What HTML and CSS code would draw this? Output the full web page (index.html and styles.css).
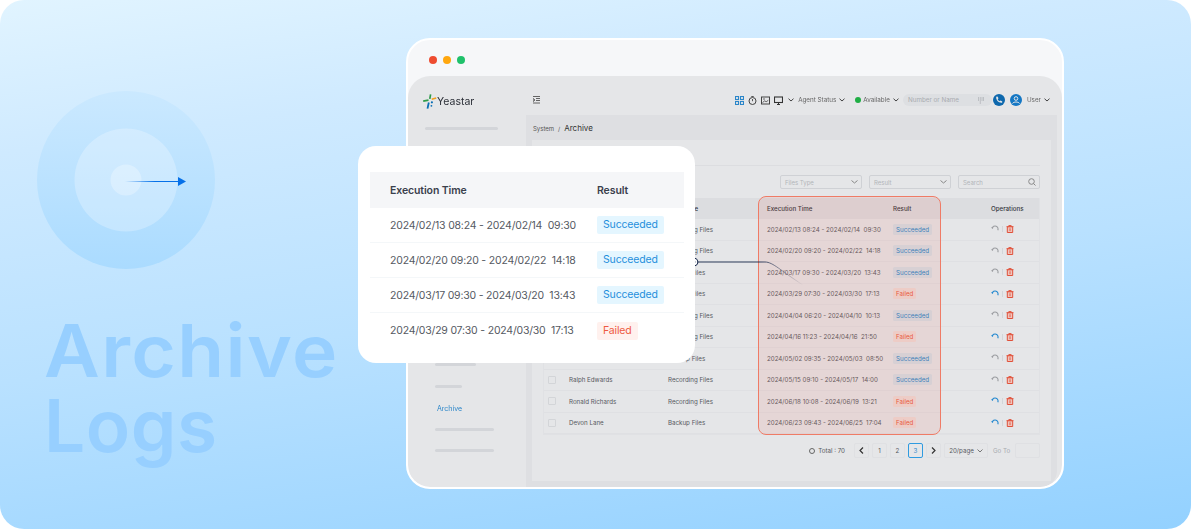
FILE: index.html
```html
<!DOCTYPE html>
<html lang="en">
<head>
<meta charset="utf-8">
<title>Archive Logs</title>
<link rel="stylesheet" href="styles.css">
</head>
<body>
<svg class="sprite" width="0" height="0" aria-hidden="true">
  <symbol id="ico-retry" viewBox="0 0 8 8">
    <path d="M6.800 5.300A3 3 0 1 0 1.200 3.200" fill="none" stroke="currentColor" stroke-width="1.100"/>
    <path d="M.1 2.200l1.300 1.700 1.200-1.500z" fill="currentColor"/>
  </symbol>
  <symbol id="ico-bin" viewBox="0 0 8 8">
    <path d="M.5 1.600h7M2.800 1.500V.5h2.400v1" fill="none" stroke="#e0513a" stroke-width=".9"/>
    <path d="M1.300 1.800h5.400v5.700H1.300z" fill="#f0c4bc" stroke="#e0513a" stroke-width="1"/>
    <path d="M4 3.300v2.800" stroke="#e0513a" stroke-width=".9"/>
  </symbol>
  <symbol id="ico-chev" viewBox="0 0 6 4">
    <path d="M.5.700l2.500 2.300 2.500-2.300" fill="none" stroke="#444" stroke-width="1"/>
  </symbol>
</svg>
<main class="stage">
  <svg class="rings" width="180" height="180" viewBox="0 0 180 180" aria-hidden="true">
    <defs>
      <linearGradient id="ringFill" x1="0" y1="0" x2="0" y2="1">
        <stop offset="0" stop-color="#c9e8ff" stop-opacity=".85"/>
        <stop offset="1" stop-color="#aadbff"/>
      </linearGradient>
      <linearGradient id="arrowLine" x1="0" y1="0" x2="1" y2="0">
        <stop offset="0" stop-color="#0670e8" stop-opacity="0"/>
        <stop offset=".55" stop-color="#0670e8"/>
      </linearGradient>
    </defs>
    <circle cx="89" cy="89" r="89" fill="url(#ringFill)"/>
    <circle cx="89" cy="89" r="51.500" fill="#fff" fill-opacity=".26"/>
    <circle cx="89" cy="89" r="15.500" fill="#fff" fill-opacity=".28"/>
    <rect x="88" y="90" width="54" height="1" fill="url(#arrowLine)"/>
    <path d="M141 86l8 4.500-8 4.500z" fill="#0670e8"/>
  </svg>
  <h1 class="headline"><span class="headline-first">Archive</span><span class="headline-second">Logs</span></h1>

  <section class="window">
    <div class="dots"><i class="dot red"></i><i class="dot amber"></i><i class="dot green"></i></div>
    <div class="app">
      <aside class="sidebar">
        <div class="logo">
          <svg width="14" height="15" viewBox="0 0 14 15" aria-hidden="true">
            <path d="M7.600.4L6.800 4.800M.2 7.200l5.300-1" fill="none" stroke="#2e9b49" stroke-width="1.700"/>
            <path d="M8.700 5.200L13.200 4" fill="none" stroke="#f0a01e" stroke-width="1.700"/>
            <path d="M5.800 8.500L4.500 14.600" fill="none" stroke="#0a6fb5" stroke-width="1.800"/>
            <circle cx="8.900" cy="8.300" r="1.100" fill="#0a6fb5"/>
            <circle cx="8.400" cy="11.800" r=".9" fill="#0a6fb5"/>
          </svg>
          <span>Yeastar</span>
        </div>
        <div class="skeleton wide"></div>
        <div class="side-bottom">
          <div class="skeleton mid"></div>
          <div class="skeleton short"></div>
          <div class="side-link">Archive</div>
          <div class="skeleton long first-long"></div>
          <div class="skeleton long"></div>
        </div>
      </aside>
      <div class="workspace">
        <header class="topbar">
          <svg class="menu-ico" width="8" height="8" viewBox="0 0 8 8" aria-hidden="true"><path d="M0 .5h7M3 2.500h4M3 4.500h4M0 7h7M0 2.500l2 1.500-2 1.500z" stroke="#555" stroke-width=".9" fill="none"/></svg>
          <div class="tools">
            <svg width="9" height="9" viewBox="0 0 9 9" aria-hidden="true"><g fill="none" stroke="#2b86c9" stroke-width="1.100"><rect x=".5" y=".5" width="3" height="3"/><rect x="5.500" y=".5" width="3" height="3"/><rect x=".5" y="5.500" width="3" height="3"/><rect x="5.500" y="5.500" width="3" height="3"/></g></svg>
            <svg class="gap-a" width="9" height="9" viewBox="0 0 9 9" aria-hidden="true"><circle cx="4.500" cy="5" r="3.500" fill="none" stroke="#444"/><path d="M4.500 3v2.200M3.300.5h2.400" stroke="#444" stroke-width=".9"/></svg>
            <svg class="gap-a" width="9" height="9" viewBox="0 0 9 9" aria-hidden="true"><rect x=".5" y="1" width="8" height="7" fill="none" stroke="#444"/><path d="M1.500 6.500l2.300-1.700 1.300 1 2.200-1.500M2 3h2" fill="none" stroke="#444" stroke-width=".8"/></svg>
            <svg class="gap-a" width="9" height="9" viewBox="0 0 9 9" aria-hidden="true"><rect x=".5" y="1" width="8" height="5.500" fill="none" stroke="#333" stroke-width="1.100"/><path d="M3 8.500h3M4.500 6.500v2" stroke="#333"/></svg>
            <svg class="chev gap-b" width="6" height="4" aria-hidden="true"><use href="#ico-chev"/></svg>
            <span class="top-label">Agent Status</span>
            <svg class="chev" width="6" height="4" aria-hidden="true"><use href="#ico-chev"/></svg>
            <i class="status-dot"></i>
            <span class="top-label tight">Available</span>
            <svg class="chev" width="6" height="4" aria-hidden="true"><use href="#ico-chev"/></svg>
            <div class="dial"><span>Number or Name</span><svg width="6" height="7" viewBox="0 0 6 7" aria-hidden="true"><path d="M.5 0v4M2.300 0v7M4 0v4M5.500 0v4" stroke="#b5b8bc" stroke-width=".8"/></svg></div>
            <span class="round-btn"><svg width="8" height="8" viewBox="0 0 8 8" aria-hidden="true"><path d="M1.200.8l1.300-.2 1 1.700-.8.900c.4.900 1.100 1.600 2 2l.9-.8 1.700 1-.2 1.300c-3.200.5-6.300-2.600-5.900-5.900z" fill="#e5e6e8"/></svg></span>
            <span class="round-btn user"><svg width="10" height="10" viewBox="0 0 10 10" aria-hidden="true"><circle cx="5" cy="3.500" r="1.800" fill="none" stroke="#e5e6e8"/><path d="M1.500 8.500c1-2 6-2 7 0" fill="none" stroke="#e5e6e8"/></svg></span>
            <span class="top-label">User</span>
            <svg class="chev" width="6" height="4" aria-hidden="true"><use href="#ico-chev"/></svg>
          </div>
        </header>
        <div class="content">
          <div class="crumb"><span class="crumb-root">System</span><span class="crumb-sep">/</span><span class="crumb-now">Archive</span></div>
          <div class="panel">
            <div class="panel-head"></div>
            <div class="filters">
              <div class="field"><span>Files Type</span><svg width="7" height="4" viewBox="0 0 7 4" aria-hidden="true"><path d="M.5.500l3 2.500 3-2.500" fill="none" stroke="#888"/></svg></div>
              <div class="field"><span>Result</span><svg width="7" height="4" viewBox="0 0 7 4" aria-hidden="true"><path d="M.5.500l3 2.500 3-2.500" fill="none" stroke="#888"/></svg></div>
              <div class="field"><span>Search</span><svg width="8" height="8" viewBox="0 0 8 8" aria-hidden="true"><circle cx="3.500" cy="3.500" r="2.800" fill="none" stroke="#888"/><path d="M5.500 5.500l2 2" stroke="#888"/></svg></div>
            </div>
            <div class="log-table">
              <div class="log-row log-head"><span class="c-check"></span><span class="c-name"></span><span class="c-type">Files Type</span><span class="c-time">Execution Time</span><span class="c-result">Result</span><span class="c-ops">Operations</span></div>
              <div class="log-row"><span class="c-check"></span><span class="c-name"></span><span class="c-type">Recording Files</span><span class="c-time">2024/02/13 08:24 - 2024/02/14&nbsp; 09:30</span><span class="c-result"><b class="tag ok">Succeeded</b></span><span class="c-ops"><svg class="retry" width="8" height="8"><use href="#ico-retry"/></svg><i class="sep"></i><svg width="8" height="8"><use href="#ico-bin"/></svg></span></div>
              <div class="log-row"><span class="c-check"></span><span class="c-name"></span><span class="c-type">Recording Files</span><span class="c-time">2024/02/20 09:20 - 2024/02/22&nbsp; 14:18</span><span class="c-result"><b class="tag ok">Succeeded</b></span><span class="c-ops"><svg class="retry" width="8" height="8"><use href="#ico-retry"/></svg><i class="sep"></i><svg width="8" height="8"><use href="#ico-bin"/></svg></span></div>
              <div class="log-row"><span class="c-check"></span><span class="c-name"></span><span class="c-type">Backup Files</span><span class="c-time">2024/03/17 09:30 - 2024/03/20&nbsp; 13:43</span><span class="c-result"><b class="tag ok">Succeeded</b></span><span class="c-ops"><svg class="retry" width="8" height="8"><use href="#ico-retry"/></svg><i class="sep"></i><svg width="8" height="8"><use href="#ico-bin"/></svg></span></div>
              <div class="log-row"><span class="c-check"></span><span class="c-name"></span><span class="c-type">Backup Files</span><span class="c-time">2024/03/29 07:30 - 2024/03/30&nbsp; 17:13</span><span class="c-result"><b class="tag bad">Failed</b></span><span class="c-ops"><svg class="retry on" width="8" height="8"><use href="#ico-retry"/></svg><i class="sep"></i><svg width="8" height="8"><use href="#ico-bin"/></svg></span></div>
              <div class="log-row"><span class="c-check"></span><span class="c-name"></span><span class="c-type">Recording Files</span><span class="c-time">2024/04/04 06:20 - 2024/04/10&nbsp; 10:13</span><span class="c-result"><b class="tag ok">Succeeded</b></span><span class="c-ops"><svg class="retry" width="8" height="8"><use href="#ico-retry"/></svg><i class="sep"></i><svg width="8" height="8"><use href="#ico-bin"/></svg></span></div>
              <div class="log-row"><span class="c-check"></span><span class="c-name"></span><span class="c-type">Recording Files</span><span class="c-time">2024/04/16 11:23 - 2024/04/16&nbsp; 21:50</span><span class="c-result"><b class="tag bad">Failed</b></span><span class="c-ops"><svg class="retry on" width="8" height="8"><use href="#ico-retry"/></svg><i class="sep"></i><svg width="8" height="8"><use href="#ico-bin"/></svg></span></div>
              <div class="log-row"><span class="c-check"></span><span class="c-name"></span><span class="c-type">Backup Files</span><span class="c-time">2024/05/02 09:35 - 2024/05/03&nbsp; 08:50</span><span class="c-result"><b class="tag ok">Succeeded</b></span><span class="c-ops"><svg class="retry" width="8" height="8"><use href="#ico-retry"/></svg><i class="sep"></i><svg width="8" height="8"><use href="#ico-bin"/></svg></span></div>
              <div class="log-row"><span class="c-check"><i class="box"></i></span><span class="c-name">Ralph Edwards</span><span class="c-type">Recording Files</span><span class="c-time">2024/05/15 09:10 - 2024/05/17&nbsp; 14:00</span><span class="c-result"><b class="tag ok">Succeeded</b></span><span class="c-ops"><svg class="retry" width="8" height="8"><use href="#ico-retry"/></svg><i class="sep"></i><svg width="8" height="8"><use href="#ico-bin"/></svg></span></div>
              <div class="log-row"><span class="c-check"><i class="box"></i></span><span class="c-name">Ronald Richards</span><span class="c-type">Recording Files</span><span class="c-time">2024/06/18 10:08 - 2024/06/19&nbsp; 13:21</span><span class="c-result"><b class="tag bad">Failed</b></span><span class="c-ops"><svg class="retry on" width="8" height="8"><use href="#ico-retry"/></svg><i class="sep"></i><svg width="8" height="8"><use href="#ico-bin"/></svg></span></div>
              <div class="log-row"><span class="c-check"><i class="box"></i></span><span class="c-name">Devon Lane</span><span class="c-type">Backup Files</span><span class="c-time">2024/06/23 09:43 - 2024/06/25&nbsp; 17:04</span><span class="c-result"><b class="tag bad">Failed</b></span><span class="c-ops"><svg class="retry on" width="8" height="8"><use href="#ico-retry"/></svg><i class="sep"></i><svg width="8" height="8"><use href="#ico-bin"/></svg></span></div>
            </div>
            <nav class="pager">
              <i class="pager-spin"></i><span class="pager-total">Total : 70</span>
              <span class="page-btn"><svg width="5" height="7" viewBox="0 0 5 7" aria-hidden="true"><path d="M4 .5l-3 3 3 3" fill="none" stroke="#333" stroke-width="1.200"/></svg></span>
              <span class="page-btn">1</span><span class="page-btn">2</span><span class="page-btn active">3</span>
              <span class="page-btn"><svg width="5" height="7" viewBox="0 0 5 7" aria-hidden="true"><path d="M1 .5l3 3-3 3" fill="none" stroke="#333" stroke-width="1.200"/></svg></span>
              <span class="page-size">20/page <svg width="6" height="4" viewBox="0 0 6 4" aria-hidden="true"><path d="M.5.500l2.500 2.500 2.500-2.500" fill="none" stroke="#777"/></svg></span>
              <span class="goto">Go To</span><span class="goto-input"></span>
            </nav>
          </div>
        </div>
      </div>
    </div>
  </section>

  <div class="highlight"></div>
  <svg class="connector" width="120" height="40" viewBox="0 0 120 40" aria-hidden="true">
    <defs><linearGradient id="lineFade" gradientUnits="userSpaceOnUse" x1="70" y1="0" x2="114" y2="0"><stop offset="0" stop-color="#16274a"/><stop offset=".25" stop-color="#16274a" stop-opacity=".7"/><stop offset="1" stop-color="#16274a" stop-opacity="0"/></linearGradient></defs>
    <circle cx="5" cy="5" r="3.800" fill="#fff" stroke="#16274a" stroke-width="1.100"/>
    <circle cx="5" cy="5" r="1.400" fill="#16274a"/>
    <path d="M9 5H76c8 0 16 9 38 23" fill="none" stroke="url(#lineFade)" stroke-width=".9"/>
  </svg>

  <section class="card">
    <div class="card-row card-head"><span class="card-time">Execution Time</span><span>Result</span></div>
    <div class="card-row"><span class="card-time">2024/02/13 08:24 - 2024/02/14&nbsp; 09:30</span><b class="pill ok">Succeeded</b></div>
    <div class="card-row"><span class="card-time">2024/02/20 09:20 - 2024/02/22&nbsp; 14:18</span><b class="pill ok">Succeeded</b></div>
    <div class="card-row"><span class="card-time">2024/03/17 09:30 - 2024/03/20&nbsp; 13:43</span><b class="pill ok">Succeeded</b></div>
    <div class="card-row"><span class="card-time">2024/03/29 07:30 - 2024/03/30&nbsp; 17:13</span><b class="pill bad">Failed</b></div>
  </section>
</main>
</body>
</html>
```
FILE: styles.css
```css
* { box-sizing: border-box; }
html, body { margin: 0; padding: 0; background: #fff; }
body { width: 1191px; height: 529px; overflow: hidden; font-family: Inter, "Liberation Sans", sans-serif; }
i, b { font-style: normal; font-weight: 400; }
svg { display: block; flex: none; }
.sprite { position: absolute; }

.stage { position: relative; width: 1191px; height: 529px; border-radius: 24px; overflow: hidden;
  background: linear-gradient(172deg, #e1f4ff 0%, #cfeaff 22%, #b9e1ff 55%, #93d1ff 100%); }

.rings { position: absolute; left: 37px; top: 91px; }
.headline { position: absolute; left: 44px; top: 313px; margin: 0; font-size: 73px; line-height: 75px; font-weight: 600; color: #97cfff; }
.headline-first { display: block; letter-spacing: 1.300px; transform: scaleX(1.05); transform-origin: left center; }
.headline-second { display: block; letter-spacing: .5px; }

/* window */
.window { position: absolute; left: 406px; top: 38px; width: 658px; height: 451px; border: 2px solid #fff; border-radius: 24px; background: #f6f7f9; display: flex; flex-direction: column; overflow: hidden; filter: blur(.35px); }
.dots { height: 36px; display: flex; align-items: center; gap: 6px; padding: 4px 0 0 21px; flex: none; }
.dot { width: 8px; height: 8px; border-radius: 50%; }
.red { background: #ee4c30; } .amber { background: #ffa70f; } .green { background: #1fc16b; }
.app { flex: 1; display: flex; background: #e5e6e8; border-radius: 22px; overflow: hidden; min-height: 0; }

.sidebar { width: 118px; flex: none; padding: 15px 0 0 15px; display: flex; flex-direction: column; }
.logo { display: flex; align-items: center; gap: 0; height: 20px; font-size: 10.500px; color: #2c3038; }
.skeleton { height: 3px; border-radius: 2px; background: #d3d5d9; }
.skeleton.wide { width: 73px; margin: 16px 0 0 2px; }
.side-bottom { margin-top: auto; padding: 0 0 35px 12px; display: flex; flex-direction: column; }
.skeleton.mid { width: 41px; }
.skeleton.short { width: 27px; margin-top: 19px; }
.skeleton.long { width: 59px; margin-top: 18px; }
.skeleton.first-long { margin-top: 14.500px; }
.side-link { font-size: 7px; line-height: 10px; color: #2b86c9; margin: 15.500px 0 0 2px; }

.workspace { flex: 1; min-width: 0; display: flex; flex-direction: column; }
.topbar { height: 39px; flex: none; display: flex; align-items: center; justify-content: space-between; padding: 9px 12px 0 7px; }
.tools { display: flex; align-items: center; font-size: 6.300px; color: #666; }
.gap-a { margin-left: 4px; }
.gap-b { margin-left: 5px; }
.top-label { margin: 0 3px 0 4px; white-space: nowrap; }
.top-label.tight { margin-left: 2px; }
.status-dot { width: 6px; height: 6px; border-radius: 50%; background: #1fae45; margin-left: 10px; }
.dial { width: 89px; height: 12px; border-radius: 6px; background: #dddfe2; display: flex; align-items: center; justify-content: space-between; padding: 0 8px 0 5px; margin: 0 1px 0 4px; color: #a8abb0; }
.round-btn { width: 12px; height: 12px; border-radius: 50%; background: #0e68ad; display: flex; align-items: center; justify-content: center; margin-right: 5px; }
.round-btn.user { background: #1477c4; margin-right: 1px; }

.content { flex: 1; min-height: 0; background: #dedfe2; padding: 0 6px 6px 6px; margin-right: 5px; border-radius: 0 0 16px 0; display: flex; flex-direction: column; }
.crumb { height: 25px; flex: none; display: flex; align-items: center; gap: 4px; padding: 1px 0 0 1px; color: #555; font-size: 6px; }
.crumb-now { font-size: 8px; color: #333; }
.panel { flex: 1; min-height: 0; background: #e5e6e8; padding: 0 11px; display: flex; flex-direction: column; }
.panel-head { height: 26px; border-bottom: 1px solid #dcdde0; flex: none; }
.filters { display: flex; justify-content: flex-end; gap: 7px; padding-top: 9px; height: 32px; flex: none; }
.field { width: 82px; height: 14px; border: 1px solid #cfd1d5; border-radius: 2px; display: flex; align-items: center; justify-content: space-between; padding: 0 3px 0 4px; font-size: 6px; color: #b2b5b9; }

.log-table { border: 1px solid #e0e1e4; border-top: 0; flex: none; }
.log-row { height: 21.500px; display: flex; align-items: center; font-size: 6.200px; color: #55585e; border-bottom: 1px solid #dfe0e3; white-space: nowrap; }
.log-head { height: 21px; background: #dcdde0; color: #34373d; font-weight: 500; border-bottom: 0; }
.c-check { width: 25px; flex: none; padding-left: 4px; }
.c-name { width: 99px; flex: none; }
.c-type { width: 99px; flex: none; }
.c-time { width: 126px; flex: none; }
.c-result { width: 98px; flex: none; }
.c-ops { flex: 1; display: flex; align-items: center; }
.box { display: block; width: 8px; height: 8px; border: 1px solid #d3d5d8; border-radius: 1px; }
.tag { display: inline-block; height: 11px; line-height: 11px; padding: 0 3px; border-radius: 1.500px; font-size: 6.200px; }
.tag.ok { background: #d5dfe6; color: #2b86c9; }
.tag.bad { background: #eedad6; color: #e85a40; }
.retry { color: #9a9ca0; }
.retry.on { color: #1f86cf; }
.sep { width: 1px; height: 6px; background: #d3d5d8; margin: 0 3px; }

.pager { display: flex; align-items: center; justify-content: flex-end; height: 15px; margin-top: 8px; font-size: 6.200px; color: #55585e; gap: 3px; }
.pager-spin { width: 6px; height: 6px; border: 1px solid #666; border-radius: 50%; }
.pager-total { margin-right: 6px; }
.page-btn { width: 15px; height: 15px; border: 1px solid #dfe0e3; border-radius: 2px; display: flex; align-items: center; justify-content: center; }
.page-btn.active { border-color: #2f9be0; color: #2f86c9; }
.page-size { width: 44px; height: 15px; border: 1px solid #dfe0e3; border-radius: 2px; display: flex; align-items: center; justify-content: center; gap: 3px; }
.goto { margin-left: 2px; color: #a8abb0; width: 19px; }
.goto-input { width: 25px; height: 15px; border: 1px solid #dfe0e3; border-radius: 2px; }

/* overlays */
.highlight { position: absolute; left: 758px; top: 196px; width: 183px; height: 239px; border: 1.500px solid #ef7b66; border-radius: 8px; background: rgba(240, 90, 70, .11); }
.connector { position: absolute; left: 689px; top: 257px; }

.card { position: absolute; left: 358px; top: 146px; width: 337px; height: 217px; background: #fff; border-radius: 18px; padding: 26px 11px 0 12px; }
.card-row { height: 35px; display: flex; align-items: center; font-size: 10.500px; letter-spacing: -.2px; color: #555962; border-bottom: 1px solid #f4f7f9; white-space: nowrap; }
.card-row:last-child { border-bottom: 0; }
.card-head { height: 36px; background: #f5f6f8; border-bottom: 0; font-weight: 600; color: #3a404c; font-size: 10.500px; letter-spacing: -.1px; }
.card-time { width: 227px; padding-left: 20px; flex: none; }
.pill { display: inline-block; height: 18px; line-height: 18px; padding: 0 6px; border-radius: 2px; font-size: 10.500px; letter-spacing: -.15px; }
.pill.ok { background: #e4f6ff; color: #1f8fdc; }
.pill.bad { background: #fff1ee; color: #ee5a42; }
```
